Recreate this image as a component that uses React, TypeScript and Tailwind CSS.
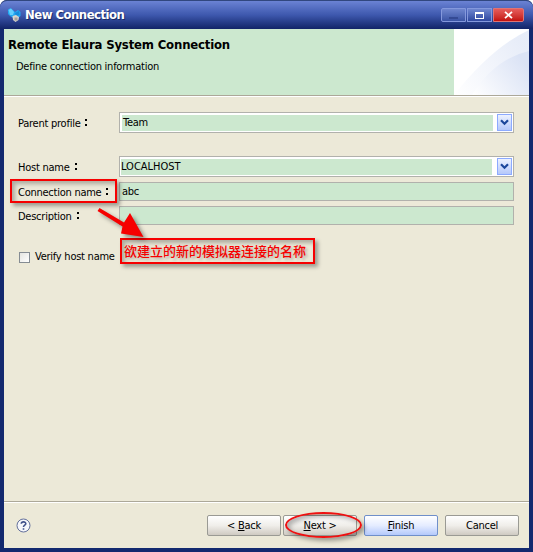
import type { ReactNode } from "react";

const Chevron = () => (
  <div className="flex h-[17px] w-[15px] items-center justify-center border border-[#8caaff] bg-linear-to-b from-[#edf2ff] to-[#b5c8fa]">
    <svg width="9" height="7" viewBox="0 0 9 7">
      <path d="M1 1.3 4.5 4.8 8 1.3" fill="none" stroke="#1c479b" strokeWidth="2.2" />
    </svg>
  </div>
);

function Label({ children }: { children: ReactNode }) {
  return (
    <span className="flex w-[101px] shrink-0 items-center whitespace-nowrap">
      <span className="pt-[2px]">{children}</span>
      <span className="ml-[5px] flex flex-col gap-[3px]">
        <i className="size-[2px] bg-black" />
        <i className="size-[2px] bg-black" />
      </span>
    </span>
  );
}

function Combo({ value, inset }: { value: string; inset: string }) {
  return (
    <div className="flex h-[21px] w-[395px] items-center justify-between border border-[#b1b1ac] bg-white p-px">
      <div className={`flex h-[16px] items-center bg-[#cce8cf] ${inset}`}>
        <span>{value}</span>
      </div>
      <Chevron />
    </div>
  );
}

function Field({ value }: { value: string }) {
  return (
    <div className="flex h-[19px] w-[395px] items-center border border-[#b1b1ac] bg-[#cce8cf] pt-px pl-[2px]">{value}</div>
  );
}

function Button({ children, primary = false }: { children: ReactNode; primary?: boolean }) {
  return (
    <button
      className={`flex h-[21px] w-[74px] items-center justify-center rounded-[2px] border pt-px ${
        primary
          ? "border-[#6f8fca] bg-linear-to-b from-white via-[#e5ecff] to-[#b4c9fb]"
          : "border-[#9a9a94] bg-linear-to-b from-white via-[#f0eeea] to-[#cfcac2]"
      }`}
    >
      <span className="tracking-[-0.25px]">{children}</span>
    </button>
  );
}

export default function App() {
  return (
    <div className="relative h-[552px] w-[533px] overflow-hidden bg-white font-['DejaVu_Sans_Condensed','DejaVu_Sans',sans-serif] text-[11px] leading-[14px] tracking-[-0.25px] text-black">
      <div className="flex h-full flex-col rounded-t-[7px] bg-[#13296f]">
        <header className="flex h-[29px] shrink-0 items-center rounded-t-[7px] border-t border-[#31477f] bg-linear-to-b from-[#6b83d4] via-[#3e58ae] via-50% to-[#122468] pr-[9px] pl-[7px]">
          <svg width="15" height="16" viewBox="0 0 15 16">
            <path d="M1 2.5 3.5 1 6 3 8 5 11 3 13.5 5 13.5 9 11 11 6 11 3 9 1 7Z" fill="#21a7f2" />
            <path d="M1.5 3 4 1.5 7 5 6 8 3 8Z" fill="#63d0ff" />
            <path d="M8 6 12 4 12.5 8 9 9Z" fill="#168bdc" />
            <path d="M5.5 9 9 8 12 10 11.5 13 8.5 15 6 13Z" fill="#d6d4cd" />
            <path d="M7.5 10.5h3v3h-3z" fill="#a7a19b" />
          </svg>
          <h1 className="ml-[3px] grow text-[13px] font-bold tracking-[-0.53px] text-white [text-shadow:1px_1px_#1c2b66]">New Connection</h1>
          <div className="flex h-[14px] gap-px">
            <div className="flex w-[25px] items-end justify-center rounded-l-[2px] border border-[#8498dc] bg-linear-to-b from-[#6f86cf] to-[#3b54a5] pb-[2px]">
              <i className="h-[2px] w-[9px] bg-[#344a94]" />
            </div>
            <div className="flex w-[25px] items-center justify-center border border-[#8498dc] bg-linear-to-b from-[#6f86cf] to-[#3048a0]">
              <i className="h-[7px] w-[9px] border border-t-2 border-white" />
            </div>
            <div className="flex w-[31px] items-center justify-center rounded-r-[2px] border border-[#df7474] bg-linear-to-b from-[#e65b5b] to-[#c30b0b]">
              <svg width="9" height="8" viewBox="0 0 9 8"><path d="m1 .8 7 6.4M8 .8 1 7.2" stroke="white" strokeWidth="1.8" /></svg>
            </div>
          </div>
        </header>

        <div className="mx-[4px] mb-[4px] flex grow flex-col bg-[#ece9d8]">
          <section className="flex h-[67px] shrink-0 justify-between border-b border-[#aca899] bg-[#cce8cf]">
            <div className="pt-[9px] pl-[4px]">
              <h2 className="text-[13px] leading-[14px] font-bold tracking-[-0.18px] whitespace-nowrap">Remote Elaura System Connection</h2>
              <p className="mt-[8px] ml-[8px]">Define connection information</p>
            </div>
            <svg width="75" height="66" viewBox="0 0 75 66">
              <defs>
                <linearGradient id="sky" x1="0" y1="1" x2="1" y2=".4">
                  <stop stopColor="#fff" /><stop offset="1" stopColor="#dbe3f5" />
                </linearGradient>
              </defs>
              <path d="M0 0h75v66H0z" fill="#fff" />
              <path d="M0 66Q38 18 75 1V66Z" fill="url(#sky)" opacity=".65" />
              <path d="M18 66Q40 30 75 22V66Z" fill="url(#sky)" />
            </svg>
          </section>

          <main className="flex grow flex-col border-t border-white pt-[15px] pl-[14px]">
            <div className="flex items-center"><Label>Parent profile</Label><Combo value="Team" inset="ml-[1px] w-[371px] pl-px pt-px" /></div>
            <div className="mt-[23px] flex items-center"><Label>Host name</Label><Combo value="LOCALHOST" inset="w-[371px] tracking-normal" /></div>
            <div className="mt-[5px] flex items-center"><Label>Connection name</Label><Field value="abc" /></div>
            <div className="mt-[5px] flex items-center"><Label>Description</Label><Field value="" /></div>
            <div className="mt-[25px] flex items-center gap-[5px] pl-px">
              <i className="size-[11px] border border-[#858c93] bg-linear-to-br from-[#e5e5e1] to-white" />
              <span>Verify host name</span>
            </div>
          </main>

          <footer className="flex h-[47px] shrink-0 items-center border-t border-[#aca899] pr-[10px] pl-[12px] shadow-[inset_0_1px_white]">
            <svg width="15" height="15" viewBox="0 0 15 15">
              <circle cx="7.5" cy="7.5" r="6.5" fill="#f5f6fa" stroke="#63709c" />
              <path d="M5.3 5.8C5.3 3.2 9.8 3.2 9.8 5.7 9.8 7.2 7.5 7.2 7.5 9M7.5 10.2v1.5" fill="none" stroke="#40518a" strokeWidth="1.6" />
            </svg>
            <div className="ml-auto flex">
              <Button>&lt; <u>B</u>ack</Button>
              <div className="ml-[2px]"><Button><u>N</u>ext &gt;</Button></div>
              <div className="ml-[7px]"><Button primary><u>F</u>inish</Button></div>
              <div className="ml-[7px]"><Button>Cancel</Button></div>
            </div>
          </footer>
        </div>
      </div>

      <div className="absolute top-[179px] left-[10px] h-[24px] w-[107px] border-2 border-[#f60000] shadow-[3px_3px_4px_#0005,inset_3px_3px_4px_#0004]" />
      <div className="absolute top-[238px] left-[120px] flex h-[26px] w-[195px] items-center border-2 border-[#f60000] pl-[2px] font-['Noto_Sans_CJK_SC',sans-serif] text-[13px] font-medium tracking-normal whitespace-nowrap text-[#f60000] shadow-[3px_3px_4px_#0005,inset_3px_3px_4px_#0004] [text-shadow:2px_2px_3px_#0004]">欲建立的新的模拟器连接的名称</div>
      <svg className="absolute top-[203px] left-[92px] overflow-visible drop-shadow-[3px_3px_2px_#0006]" width="56" height="40" viewBox="0 0 56 40">
        <path d="M7.5 5 32 19.5 38 10 51.5 34 29 30.5 30.5 23.5 5.5 8Z" fill="#f60000" />
      </svg>
      <div className="absolute top-[512px] left-[285px] h-[26px] w-[77px] rounded-[50%] border-2 border-[#ee1111] shadow-[3px_3px_4px_#0005,inset_3px_3px_4px_#0004]" />
    </div>
  );
}
